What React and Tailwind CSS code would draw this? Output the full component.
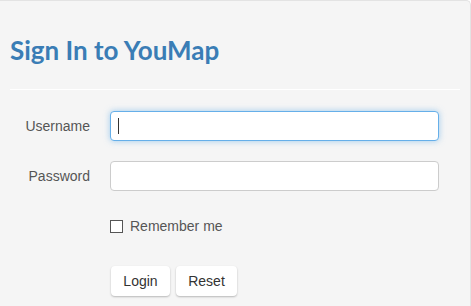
export default function App() {
  return (
    <div className="h-[306px] w-[471px] overflow-hidden bg-white font-['Liberation_Sans',Arial,sans-serif]">
      <div className="h-[330px] rounded-tr-[5px] border-t border-r border-[#e3e3e3] bg-[#f5f5f5] pl-[10px] pr-[10px]">
        <h1 className="pt-[33px] font-['Lato',sans-serif] text-[26px] font-bold leading-[32px] text-[#3a7db5]">
          Sign In to YouMap
        </h1>
        <div className="mt-[23px] h-px bg-white" />

        <form className="mt-[21px] flex flex-col pr-[21px]">
          <div className="flex items-center gap-[20px]">
            <label className="w-[80px] text-right text-sm text-[#555]" htmlFor="username">
              Username
            </label>
            <div className="relative flex-1">
              <input
                id="username"
                className="h-[30px] w-full rounded-[4px] border border-[#66afe9] bg-white px-[8px] text-sm text-[#555] shadow-[0_0_6px_rgba(102,175,233,0.6)] outline-none"
                type="text"
              />
              {/* caret */}
              <span className="absolute left-[8px] top-[7px] h-[16px] w-px bg-[#333]" />
            </div>
          </div>

          <div className="mt-[20px] flex items-center gap-[20px]">
            <label className="w-[80px] text-right text-sm text-[#555]" htmlFor="password">
              Password
            </label>
            <input
              id="password"
              className="h-[30px] flex-1 rounded-[4px] border border-[#ccc] bg-white px-[8px] text-sm text-[#555] outline-none"
              type="password"
            />
          </div>

          <label className="mt-[25px] ml-[100px] flex items-center gap-[7px] text-sm text-[#555]">
            <span className="h-[13px] w-[13px] border border-[#555] bg-white" />
            Remember me
          </label>

          <div className="mt-[30px] ml-[101px] flex gap-[6px]">
            <button
              className="h-[30px] w-[59px] rounded-[4px] bg-white text-sm text-[#333] shadow-[0_1px_2px_rgba(0,0,0,0.25)]"
              type="button"
            >
              Login
            </button>
            <button
              className="h-[30px] w-[61px] rounded-[4px] bg-white text-sm text-[#333] shadow-[0_1px_2px_rgba(0,0,0,0.25)]"
              type="button"
            >
              Reset
            </button>
          </div>
        </form>
      </div>
    </div>
  );
}
